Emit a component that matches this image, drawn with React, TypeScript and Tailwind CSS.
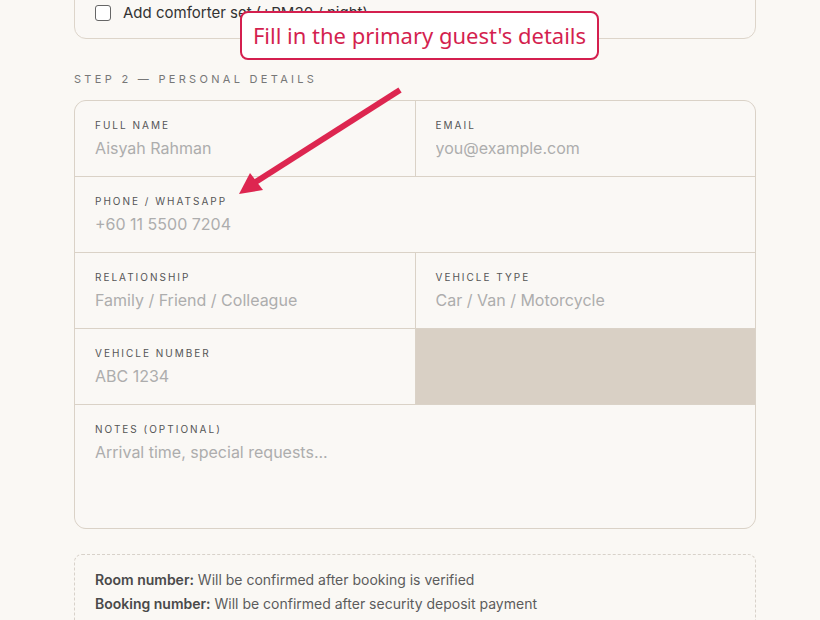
import { useState } from "react";

const fields = [
  { label: "Full name", ph: "Aisyah Rahman", span: false },
  { label: "Email", ph: "you@example.com", span: false },
  { label: "Phone / WhatsApp", ph: "+60 11 5500 7204", span: true },
  { label: "Relationship", ph: "Family / Friend / Colleague", span: false },
  { label: "Vehicle type", ph: "Car / Van / Motorcycle", span: false },
  { label: "Vehicle number", ph: "ABC 1234", span: false },
];

export default function App() {
  const [comforter, setComforter] = useState(false);
  const [values, setValues] = useState<Record<string, string>>({});
  const [notes, setNotes] = useState("");

  return (
    <main
      className="relative w-full h-[620px] overflow-hidden bg-[#faf8f4] text-[#333]"
      style={{ fontFamily: "Inter, 'Liberation Sans', sans-serif" }}
    >
      <div className="ml-[74px] w-[682px]">
        {/* step 1 leftover card */}
        <div className="-mt-[20px] border border-[#ddd5ca] rounded-xl bg-[#faf8f5] px-5 pt-[21px] pb-[14px]">
          <label className="flex items-center gap-3 text-[15px] leading-[22px] text-[#333]">
            <input
              type="checkbox"
              checked={comforter}
              onChange={(e) => setComforter(e.target.checked)}
              className="w-4 h-4 appearance-none rounded-[3px] border border-[#666] bg-white"
            />
            Add comforter set (+RM30 / night)
          </label>
        </div>

        <h3 className="mt-[33px] text-[11px] leading-[14px] tracking-[0.3em] uppercase text-[#777]">
          Step 2 — Personal details
        </h3>

        {/* personal details grid */}
        <div className="mt-[14px] grid grid-cols-2 gap-px bg-[#dad2c7] border border-[#dad2c7] rounded-xl overflow-hidden">
          {fields.map((f) => (
            <div
              key={f.label}
              className={
                "bg-[#faf8f5] px-5 pt-[18px] pb-[16px] h-[75px] flex flex-col " +
                (f.span ? "col-span-2" : "")
              }
            >
              <span className="text-[10px] leading-[12px] tracking-[0.2em] uppercase text-[#555]">
                {f.label}
              </span>
              <input
                value={values[f.label] || ""}
                onChange={(e) => setValues({ ...values, [f.label]: e.target.value })}
                placeholder={f.ph}
                className="mt-[5px] bg-transparent text-[16px] leading-[24px] outline-none placeholder:text-[#adadad]"
              />
            </div>
          ))}
          <div className="bg-[#d9d0c5]"></div>
          <div className="col-span-2 bg-[#faf8f5] px-5 pt-[18px] h-[123px] flex flex-col">
            <span className="text-[10px] leading-[12px] tracking-[0.2em] uppercase text-[#555]">
              Notes (optional)
            </span>
            <textarea
              value={notes}
              onChange={(e) => setNotes(e.target.value)}
              placeholder="Arrival time, special requests..."
              className="mt-[5px] resize-none bg-transparent text-[16px] leading-[24px] outline-none placeholder:text-[#adadad] h-[60px]"
            />
          </div>
        </div>

        {/* info box */}
        <div className="mt-[25px] border border-dashed border-[#d8d2ca] rounded-lg px-5 pt-[13px] pb-4 text-[14px] leading-[24px] text-[#5c5c5c]">
          <p>
            <b className="font-semibold text-[#4a4a4a]">Room number:</b> Will be confirmed after booking is verified
          </p>
          <p>
            <b className="font-semibold text-[#4a4a4a]">Booking number:</b> Will be confirmed after security deposit payment
          </p>
        </div>
      </div>

      {/* callout */}
      <div
        className="absolute left-[240px] top-[11px] w-[359px] h-[49px] flex items-center justify-center border-2 border-[#d41f4f] rounded-lg bg-white text-[#d41f4f] text-[22px]"
        style={{ fontFamily: "'Noto Sans', sans-serif" }}
      >
        Fill in the primary guest's details
      </div>

      {/* arrow */}
      <svg className="absolute left-0 top-0" width="820" height="620">
        <line x1="400" y1="90" x2="254" y2="183" stroke="#dd2650" strokeWidth="6" />
        <polygon points="239,194 250,173 263,190" fill="#dd2650" />
      </svg>
    </main>
  );
}
